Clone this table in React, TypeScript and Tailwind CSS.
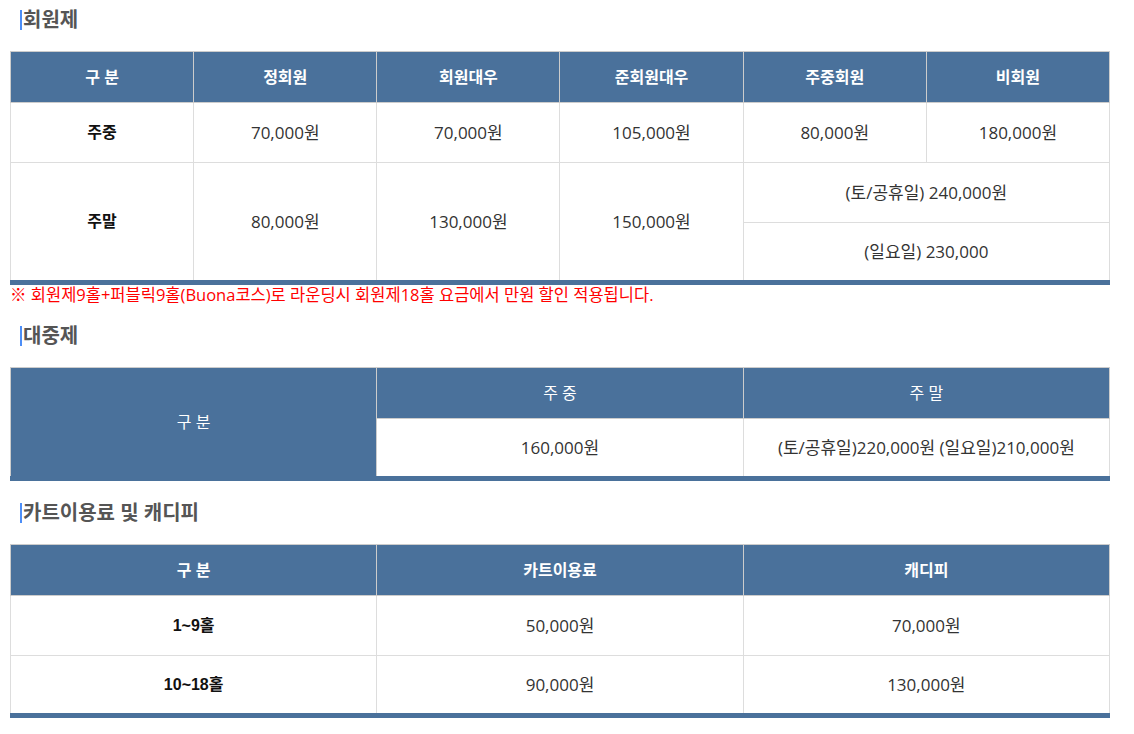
import React from "react";

function Heading({ title }: { title: string }) {
  return (
    <div className="h-[40px] flex items-center pl-[10px]">
      <span className="border-l-2 border-[#4d8ef7] pl-[1px] leading-[20px] text-[20px] font-bold text-[#555]">
        {title}
      </span>
    </div>
  );
}

const th = "border border-[#cccccc] bg-[#4a719b] text-white text-[16px] font-bold h-[51px] text-center align-middle";
const td = "border border-[#dddddd] text-[#333] text-[17px] text-center align-middle";
const tdHead =
  "border border-[#dddddd] text-[#111] text-[16px] font-bold text-center align-middle font-['Liberation_Sans','Noto_Sans_CJK_KR',sans-serif]";

export default function App() {
  return (
    <div
      className="bg-white w-[1134px] min-h-[734px] pl-[10px]"
      style={{ fontFamily: '"Open Sans", "Noto Sans CJK KR", sans-serif' }}
    >
      {/* 회원제 */}
      <Heading title="회원제" />
      <table className="mt-[11px] w-[1100px] table-fixed border-collapse border-b-[5px] border-b-[#4a719b]">
        <thead>
          <tr>
            {["구 분", "정회원", "회원대우", "준회원대우", "주중회원", "비회원"].map((h) => (
              <th key={h} className={th}>
                {h}
              </th>
            ))}
          </tr>
        </thead>
        <tbody>
          <tr className="h-[60px]">
            <td className={tdHead}>주중</td>
            <td className={td}>70,000원</td>
            <td className={td}>70,000원</td>
            <td className={td}>105,000원</td>
            <td className={td}>80,000원</td>
            <td className={td}>180,000원</td>
          </tr>
          <tr className="h-[60px]">
            <td rowSpan={2} className={tdHead}>
              주말
            </td>
            <td rowSpan={2} className={td}>
              80,000원
            </td>
            <td rowSpan={2} className={td}>
              130,000원
            </td>
            <td rowSpan={2} className={td}>
              150,000원
            </td>
            <td colSpan={2} className={td}>
              (토/공휴일) 240,000원
            </td>
          </tr>
          <tr className="h-[60px]">
            <td colSpan={2} className={td}>
              (일요일) 230,000
            </td>
          </tr>
        </tbody>
      </table>
      <p className="text-[16.5px] leading-[20px] text-[#ff0000]">
        ※ 회원제9홀+퍼블릭9홀(Buona코스)로 라운딩시 회원제18홀 요금에서 만원 할인 적용됩니다.
      </p>

      {/* 대중제 */}
      <div className="mt-[11px]">
        <Heading title="대중제" />
      </div>
      <table className="mt-[11px] w-[1100px] table-fixed border-collapse border-b-[5px] border-b-[#4a719b]">
        <tbody>
          <tr>
            <th rowSpan={2} className={`${th} !font-normal`}>
              구 분
            </th>
            <th className={`${th} !font-normal`}>주 중</th>
            <th className={`${th} !font-normal`}>주 말</th>
          </tr>
          <tr className="h-[60px]">
            <td className={td}>160,000원</td>
            <td className={td}>(토/공휴일)220,000원 (일요일)210,000원</td>
          </tr>
        </tbody>
      </table>

      {/* 카트이용료 및 캐디피 */}
      <div className="mt-[12px]">
        <Heading title="카트이용료 및 캐디피" />
      </div>
      <table className="mt-[11px] w-[1100px] table-fixed border-collapse border-b-[5px] border-b-[#4a719b]">
        <thead>
          <tr>
            <th className={th}>구 분</th>
            <th className={th}>카트이용료</th>
            <th className={th}>캐디피</th>
          </tr>
        </thead>
        <tbody>
          <tr className="h-[60px]">
            <td className={tdHead}>1~9홀</td>
            <td className={td}>50,000원</td>
            <td className={td}>70,000원</td>
          </tr>
          <tr className="h-[60px]">
            <td className={tdHead}>10~18홀</td>
            <td className={td}>90,000원</td>
            <td className={td}>130,000원</td>
          </tr>
        </tbody>
      </table>
    </div>
  );
}
